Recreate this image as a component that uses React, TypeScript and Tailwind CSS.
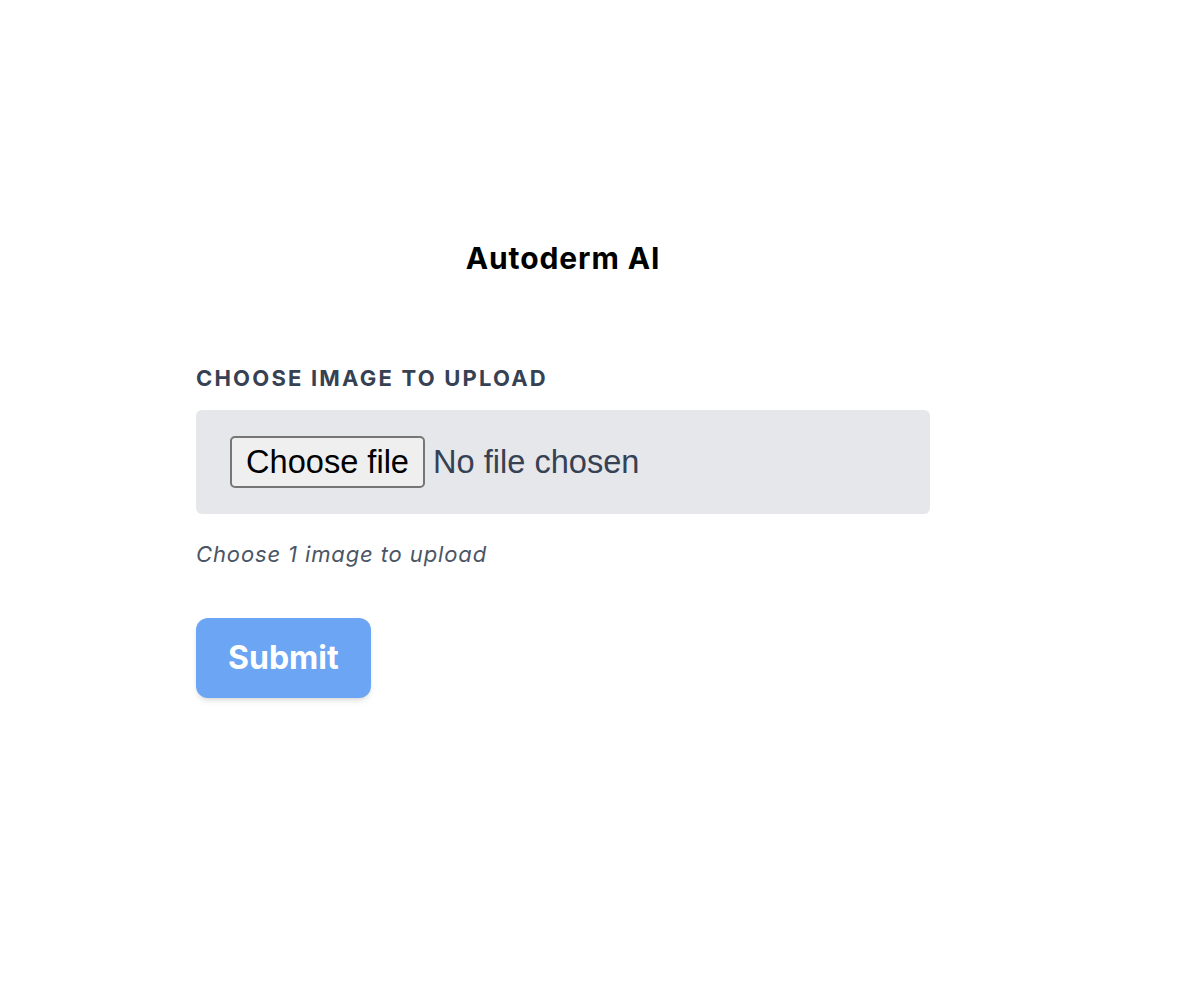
export default function App() {
  return (
    <div className="min-h-screen bg-white font-['Inter',sans-serif] pt-[240px] pl-[196px]">
      <div className="w-[734px]">
        <h1 className="text-center text-[30px] font-bold tracking-[0.03em] text-black leading-9">
          Autoderm AI
        </h1>

        <form className="mt-[88px]" onSubmit={(e) => e.preventDefault()}>
          <label
            htmlFor="file"
            className="block text-[22px] font-bold uppercase tracking-[0.1em] text-gray-700 leading-7"
          >
            Choose image to upload
          </label>
          <label
            htmlFor="file"
            className="mt-[18px] flex items-center bg-gray-200 rounded-md px-[34px] py-[26px] font-['Liberation_Sans',sans-serif] text-[32.6px] cursor-pointer"
          >
            <input id="file" type="file" accept="image/*" className="hidden" />
            <span className="inline-flex items-center h-[52px] px-[14px] border-2 border-[#767676] rounded-[5px] bg-[#efefef] text-black">
              Choose file
            </span>
            <span className="ml-[8px] text-gray-700">No file chosen</span>
          </label>
          <p className="mt-[26px] text-[22px] italic tracking-[0.04em] text-gray-600 leading-7">
            Choose 1 image to upload
          </p>
          <button
            type="submit"
            className="mt-[50px] bg-[#6ba5f3] text-white text-[32px] font-bold px-8 py-5 leading-10 rounded-xl shadow-md"
          >
            Submit
          </button>
        </form>
      </div>
    </div>
  );
}
